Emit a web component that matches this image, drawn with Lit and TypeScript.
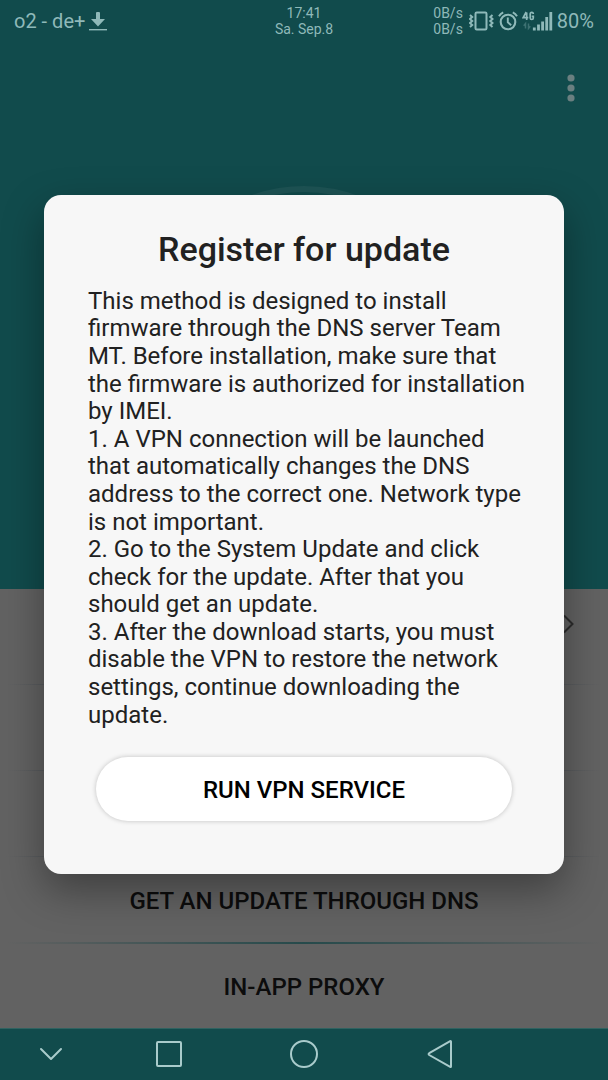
import { LitElement, html, css, svg } from "lit";
import { customElement } from "lit/decorators.js";

@customElement("status-bar")
class StatusBar extends LitElement {
  static styles = css`
    :host {
      display: grid;
      grid-template-columns: 1fr auto 1fr;
      align-items: center;
      height: 42px;
      padding: 0 14px;
      color: #8fb9b9;
      font-size: 20px;
      line-height: 24px;
    }
    .side {
      display: flex;
      align-items: center;
      gap: 4px;
    }
    .right {
      justify-content: flex-end;
    }
    .stack {
      font-size: 14px;
      line-height: 16px;
      text-align: center;
    }
    .speed {
      margin-right: 2px;
    }
    svg {
      display: block;
      flex: none;
    }
  `;
  render() {
    return html`
      <div class="side">
        <span>o2 - de+</span>
        <svg width="18" height="20" viewBox="0 0 18 20" fill="currentColor">
          <path d="M7 2q0-1 1-1h2q1 0 1 1v6h5l-7 7.500l-7-7.500h5z" />
          <path d="M0 18h18v1.400H0z" />
        </svg>
      </div>
      <div class="stack">17:41<br />Sa. Sep.8</div>
      <div class="side right">
        <div class="stack speed">0B/s<br />0B/s</div>
        <svg width="25" height="20" viewBox="0 0 25 20" fill="none" stroke="currentColor">
          <rect x="6.500" y="1.500" width="11" height="17" rx="1.200" stroke-width="2" />
          <path d="M1 4l2.200 2l-2.200 2l2.200 2l-2.200 2l2.200 2l-2.200 2M23.500 4l-2.200 2l2.200 2l-2.200 2l2.200 2l-2.200 2l2.200 2" stroke-width="2" />
        </svg>
        <svg width="20" height="20" viewBox="0 0 20 20" fill="none" stroke="currentColor">
          <circle cx="10" cy="11" r="7.300" stroke-width="2.100" />
          <path d="M1 5.200Q2.500 2.500 5.200 1.300M19 5.200Q17.500 2.500 14.800 1.300" stroke-width="2" />
          <path d="M9.800 6.500v4.700l3.400 3" stroke-width="1.900" />
        </svg>
        <svg width="31" height="20" viewBox="0 0 31 20" fill="none" stroke="currentColor">
          <path d="M4.700 9V1.500M4.200 1L1.200 6.600H6.300M11.300 3Q11.300 1.300 9.800 1.300Q8.200 1.300 8.200 3V6.900Q8.200 8.500 9.800 8.500Q11.300 8.500 11.300 7V5.400H9.700" stroke-width="1.700" />
          <path d="M3.500 17.500v-5l-1.800 2.200M6.500 12.500v5l1.800-2.200" stroke-width="1.500" opacity=".35" />
          <path d="M12.300 16.500v3M16.500 13.500v6M20.600 10.500v9M24.700 6v13.500M28.800 1v18.500" stroke-width="2.800" />
        </svg>
        <span>80%</span>
      </div>
    `;
  }
}

const navItems = [
  { label: "Hide navigation bar", shape: svg`<path d="M6 11l10 10l10-10" />` },
  { label: "Recent apps", shape: svg`<rect x="4" y="4" width="24" height="24" rx="1" />` },
  { label: "Home", shape: svg`<circle cx="16" cy="16" r="13" />` },
  { label: "Back", shape: svg`<path d="M28 3.500v25q0 .8-.8.400L6.200 17q-1.200-.900 0-1.800L27.200 3.200q.8-.4.800.300z" />` },
];

@customElement("nav-bar")
class NavBar extends LitElement {
  static styles = css`
    :host {
      display: block;
      background: #114b4c;
      border-top: 1px solid #2f6260;
    }
    nav {
      display: grid;
      grid-template-columns: 101fr 135fr 135fr 135fr 102fr;
      height: 51px;
    }
    button {
      display: grid;
      place-items: center;
      padding: 0 0 2px;
      border: 0;
      background: none;
      color: #a9cbcb;
    }
    svg {
      display: block;
      fill: none;
      stroke: currentColor;
      stroke-width: 2;
      stroke-linejoin: round;
      stroke-linecap: round;
    }
  `;
  render() {
    return html`<nav aria-label="System">
      ${navItems.map(
        (item) => html`<button type="button" aria-label=${item.label}>
          <svg width="32" height="32" viewBox="0 0 32 32">${item.shape}</svg>
        </button>`
      )}
    </nav>`;
  }
}

@customElement("register-dialog")
class RegisterDialog extends LitElement {
  static styles = css`
    :host {
      display: block;
      box-sizing: border-box;
      width: 100%;
      padding: 34px 36px 53px 44px;
      border-radius: 17px;
      background: #f7f7f7;
      box-shadow: 0 16px 40px rgba(0, 0, 0, 0.36);
      color: #212121;
    }
    h1 {
      margin: 0 8px 0 0;
      font-size: 34px;
      line-height: 40px;
      font-weight: 500;
      text-align: center;
    }
    .body {
      margin: 19px 0 28px;
      font-size: 24px;
      line-height: 1.15;
    }
    p {
      margin: 0;
    }
    button {
      display: block;
      width: calc(100% - 24px);
      height: 64px;
      margin: 0 16px 0 8px;
      padding: 2px 0 0;
      border: 0;
      border-radius: 32px;
      background: #fff;
      box-shadow: 0 0 5px rgba(0, 0, 0, 0.22);
      color: #000;
      font: 500 24px/28px Roboto, sans-serif;
    }
  `;
  render() {
    return html`
      <h1>Register for update</h1>
      <div class="body">
        <p>
          This method is designed to install firmware through the DNS server Team MT. Before installation, make sure
          that the firmware is authorized for installation by IMEI.
        </p>
        <p>
          1. A VPN connection will be launched that automatically changes the DNS address to the correct one. Network
          type is not important.
        </p>
        <p>2. Go to the System Update and click check for the update. After that you should get an update.</p>
        <p>
          3. After the download starts, you must disable the VPN to restore the network settings, continue downloading
          the update.
        </p>
      </div>
      <button type="button">RUN VPN SERVICE</button>
    `;
  }
}

@customElement("app-root")
class AppRoot extends LitElement {
  static styles = css`
    :host {
      display: flex;
      flex-direction: column;
      min-height: 100vh;
      position: relative;
      background: #626262;
      font-family: Roboto, sans-serif;
    }
    .hero {
      flex: 1;
      display: flex;
      flex-direction: column;
      background: #114b4c;
    }
    .menu {
      align-self: flex-end;
      display: grid;
      place-items: center;
      width: 32px;
      height: 48px;
      margin: 22px 21px 0;
      padding: 0;
      border: 0;
      background: none;
      color: #6a7f80;
    }
    .ring {
      align-self: center;
      box-sizing: border-box;
      width: 314px;
      height: 314px;
      margin: 74px 0;
      border: 6px solid #1e5455;
      border-radius: 50%;
    }
    .row {
      box-sizing: border-box;
      display: flex;
      align-items: center;
      justify-content: center;
      width: 100%;
      height: 86px;
      padding: 4px 34px 0;
      border: 0;
      background: none;
      color: #0c0c0c;
      font: 500 24px/28px Roboto, sans-serif;
    }
    .first {
      height: 95px;
      padding-bottom: 30px;
      justify-content: flex-end;
      color: #2c2c2c;
    }
    .row.ruled {
      background: linear-gradient(90deg, transparent 1%, #52565a 10%, #52565a 90%, transparent 99%) top / 100% 1px
        no-repeat;
    }
    .row.accent {
      background: linear-gradient(90deg, transparent 1%, #264a4b 50%, transparent 99%) top / 100% 2px no-repeat;
    }
    .overlay {
      position: absolute;
      inset: 42px 44px 53px;
      display: grid;
      align-items: center;
    }
    svg {
      display: block;
    }
  `;
  render() {
    return html`
      <header class="hero">
        <status-bar></status-bar>
        <button class="menu" type="button" aria-label="More options">
          <svg width="8" height="30" viewBox="0 0 8 30" fill="currentColor">
            <circle cx="4" cy="5" r="3.600" />
            <circle cx="4" cy="15" r="3.600" />
            <circle cx="4" cy="25" r="3.600" />
          </svg>
        </button>
        <div class="ring"></div>
      </header>
      <main>
        <button class="row first" type="button" aria-label="Open">
          <svg width="12" height="20" viewBox="0 0 12 20" fill="none" stroke="currentColor" stroke-width="2">
            <path d="M2 1.500l8.500 8.500l-8.500 8.500" />
          </svg>
        </button>
        <div class="row ruled"></div>
        <div class="row ruled"></div>
        <button class="row ruled" type="button">GET AN UPDATE THROUGH DNS</button>
        <button class="row accent" type="button">IN-APP PROXY</button>
      </main>
      <nav-bar></nav-bar>
      <div class="overlay" role="dialog" aria-label="Register for update">
        <register-dialog></register-dialog>
      </div>
    `;
  }
}
